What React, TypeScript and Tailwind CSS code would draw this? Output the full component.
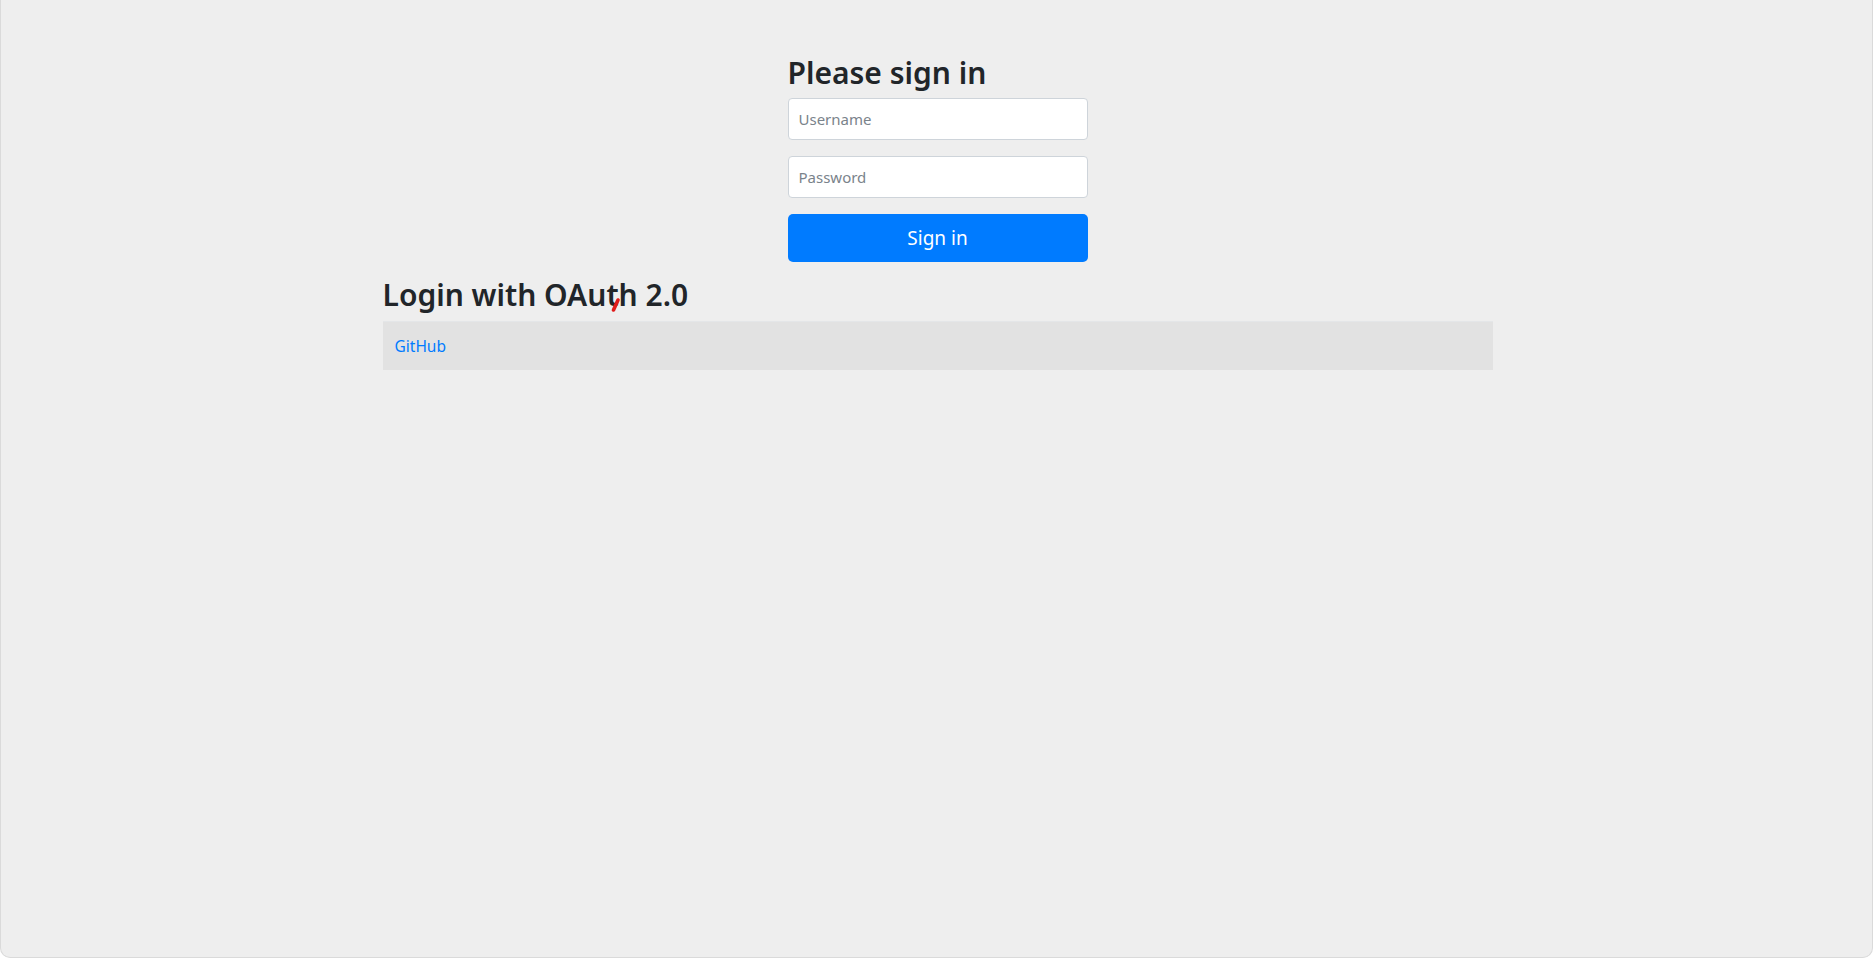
export default function App() {
  return (
    <div
      className="relative h-[958px] w-full overflow-hidden rounded-b-[10px] border-x border-b border-[#dadada] bg-[#eeeeee] pl-[2px] text-[#212529]"
      style={{ fontFamily: '"Noto Sans", "Open Sans", sans-serif' }}
    >
      <div className="mx-auto w-[1140px] px-[15px]">
        <form className="mx-auto w-[330px] px-[15px] pt-[54px] pb-[14px]" onSubmit={(e) => e.preventDefault()}>
          <h2 className="mb-[6px] h-[38px] text-[30px] leading-[38px] font-semibold">Please sign in</h2>
          <p className="mb-4">
            <input
              type="text"
              placeholder="Username"
              className="block h-[42px] w-full rounded border border-[#ced4da] bg-white px-[10px] text-[15px] text-[#495057] outline-none placeholder:text-[#7a838b]"
            />
          </p>
          <p className="mb-4">
            <input
              type="password"
              placeholder="Password"
              className="block h-[42px] w-full rounded border border-[#ced4da] bg-white px-[10px] text-[15px] text-[#495057] outline-none placeholder:text-[#7a838b]"
            />
          </p>
          <button
            type="submit"
            className="block h-12 w-full rounded-[5px] bg-[#007bff] text-[19px] text-white"
          >
            Sign in
          </button>
        </form>

        <h2 className="mb-[7px] h-[38px] text-[30px] leading-[38px] font-semibold">Login with OAuth 2.0</h2>
        <table className="w-full border-collapse">
          <tbody>
            <tr className="bg-[#e2e2e2]">
              <td className="h-12 border-t border-[#e4e6e8] px-3 align-middle">
                <a href="#" className="text-[15.5px] text-[#007bff]">
                  GitHub
                </a>
              </td>
            </tr>
          </tbody>
        </table>
      </div>

      {/* red pen cursor mark */}
      <svg className="absolute left-[608px] top-[297px]" width="14" height="16" viewBox="0 0 14 16">
        <path d="M4.5 13 L9 3" stroke="#e01b1b" strokeWidth="3.6" strokeLinecap="round" />
      </svg>
    </div>
  );
}
